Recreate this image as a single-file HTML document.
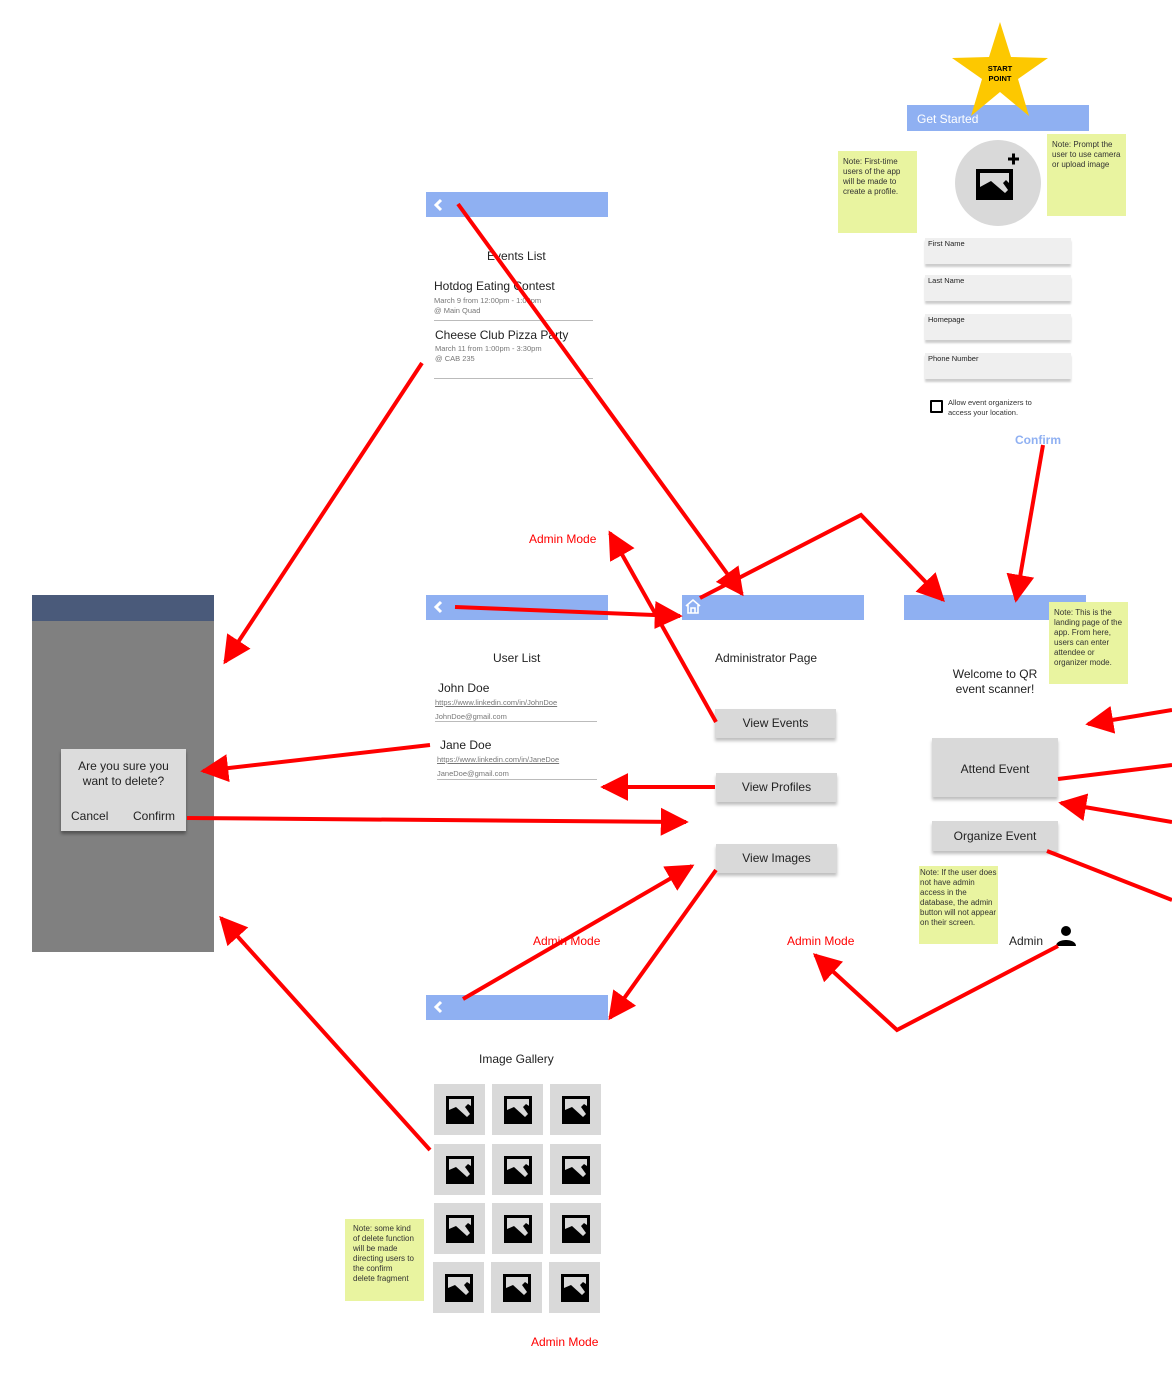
<!DOCTYPE html>
<html><head><meta charset="utf-8"><style>
*{margin:0;padding:0;box-sizing:border-box}
body{width:1172px;height:1379px;background:#fff;position:relative;overflow:hidden;font-family:"Liberation Sans",sans-serif;color:#222}
.a{position:absolute}
.bar{position:absolute;height:26px;background:#8fb0f2}
.note{position:absolute;background:#e9f4a0;font-size:8px;line-height:10px;padding:6px 5px;color:#333}
.btn{position:absolute;background:#d9d9d9;box-shadow:0 3px 3px rgba(0,0,0,.25);font-size:12px;text-align:center}
.fld{position:absolute;left:925px;width:146px;height:26px;background:#efefef;box-shadow:0 3px 2px rgba(0,0,0,.2);font-size:7.5px;padding:1px 3px}
.red{position:absolute;color:#f00;font-size:12px}
.t12{position:absolute;font-size:12px}
.sm{position:absolute;font-size:7.5px;color:#777;line-height:10px}
.hr{position:absolute;height:1px;background:#bbb}
.tile{position:absolute;width:51px;height:51px;background:#d9d9d9}
.tile svg{position:absolute;left:12px;top:12px}
.chev{position:absolute}
</style></head><body>

<div class="bar" style="left:907px;top:105px;width:182px;height:26px;color:#fff;font-size:12px;padding:7px 10px">Get Started</div>
<svg class="a" style="left:950px;top:22px" width="100" height="96" viewBox="0 0 100 96">
<polygon points="50,0 61,35 98,36 68,57 79,94 50,70 21,94 32,57 2,36 39,35" fill="#fdc800"/>
<text x="50" y="49" font-size="7.5" font-weight="bold" text-anchor="middle" font-family="Liberation Sans">START</text>
<text x="50" y="59" font-size="7.5" font-weight="bold" text-anchor="middle" font-family="Liberation Sans">POINT</text>
</svg>
<div class="note" style="left:838px;top:151px;width:79px;height:82px">Note: First-time users of the app will be made to create a profile.</div>
<div class="note" style="left:1047px;top:134px;width:79px;height:82px">Note: Prompt the user to use camera or upload image</div>
<div class="a" style="left:955px;top:140px;width:86px;height:86px;border-radius:50%;background:#d9d9d9"></div>
<svg class="a" style="left:976px;top:150px" width="48" height="52" viewBox="0 0 48 52">
<path d="M32,9h11M37.5,3.5v11" stroke="#000" stroke-width="3"/>
<rect x="0" y="19" width="37" height="31" fill="#000"/>
<polygon points="4,23 33,23 33,33 30,30 27,33 32,40 29,43 15,31 4,37" fill="#d9d9d9"/>
</svg>
<div class="fld" style="top:238px">First Name</div>
<div class="fld" style="top:275px">Last Name</div>
<div class="fld" style="top:314px">Homepage</div>
<div class="fld" style="top:353px">Phone Number</div>
<div class="a" style="left:930px;top:400px;width:13px;height:13px;border:2px solid #000;border-radius:1px"></div>
<div class="a" style="left:948px;top:398px;font-size:7.5px;line-height:10px;color:#333">Allow event organizers to<br>access your location.</div>
<div class="a" style="left:1015px;top:433px;font-size:12px;font-weight:bold;color:#8fb0f2">Confirm</div>

<!-- events list -->
<div class="bar" style="left:426px;top:192px;width:182px;height:25px"></div>
<svg class="chev" style="left:432px;top:198px" width="12" height="14"><path d="M9,2 L4,7 L9,12" fill="none" stroke="#fff" stroke-width="3"/></svg>
<div class="t12" style="left:487px;top:249px">Events List</div>
<div class="t12" style="left:434px;top:279px">Hotdog Eating Contest</div>
<div class="sm" style="left:434px;top:296px">March 9 from 12:00pm - 1:00pm<br>@ Main Quad</div>
<div class="hr" style="left:434px;top:320px;width:159px"></div>
<div class="t12" style="left:435px;top:328px">Cheese Club Pizza Party</div>
<div class="sm" style="left:435px;top:344px">March 11 from 1:00pm - 3:30pm<br>@ CAB 235</div>
<div class="hr" style="left:434px;top:378px;width:159px"></div>

<!-- delete panel -->
<div class="a" style="left:32px;top:595px;width:182px;height:357px;background:#808080"></div>
<div class="a" style="left:32px;top:595px;width:182px;height:26px;background:#4a5a7a"></div>
<div class="a" style="left:61px;top:749px;width:125px;height:82px;background:#dcdcdc;box-shadow:0 3px 3px rgba(0,0,0,.35);font-size:12px;text-align:center;padding-top:10px;line-height:15px">Are you sure you<br>want to delete?</div>
<div class="t12" style="left:71px;top:809px">Cancel</div>
<div class="t12" style="left:133px;top:809px">Confirm</div>

<!-- user list -->
<div class="bar" style="left:426px;top:595px;width:182px;height:25px"></div>
<svg class="chev" style="left:432px;top:600px" width="12" height="14"><path d="M9,2 L4,7 L9,12" fill="none" stroke="#fff" stroke-width="3"/></svg>
<div class="t12" style="left:493px;top:651px">User List</div>
<div class="t12" style="left:438px;top:681px">John Doe</div>
<div class="sm" style="left:435px;top:698px;text-decoration:underline">https://www.linkedin.com/in/JohnDoe</div>
<div class="sm" style="left:435px;top:712px">JohnDoe@gmail.com</div>
<div class="hr" style="left:435px;top:721px;width:162px"></div>
<div class="t12" style="left:440px;top:738px">Jane Doe</div>
<div class="sm" style="left:437px;top:755px;text-decoration:underline">https://www.linkedin.com/in/JaneDoe</div>
<div class="sm" style="left:437px;top:769px">JaneDoe@gmail.com</div>
<div class="hr" style="left:437px;top:779px;width:160px"></div>

<!-- admin page -->
<div class="bar" style="left:682px;top:595px;width:182px;height:25px"></div>
<svg class="a" style="left:684px;top:598px" width="18" height="17" viewBox="0 0 18 17"><path d="M2,8 L9,2 L16,8 M4,7 V15 H14 V7 M7,15 V10 H11 V15" fill="none" stroke="#fff" stroke-width="1.6"/></svg>
<div class="t12" style="left:715px;top:651px">Administrator Page</div>
<div class="btn" style="left:715px;top:709px;width:121px;height:29px;line-height:29px">View Events</div>
<div class="btn" style="left:716px;top:773px;width:121px;height:29px;line-height:29px">View Profiles</div>
<div class="btn" style="left:716px;top:844px;width:121px;height:29px;line-height:29px">View Images</div>

<!-- landing -->
<div class="bar" style="left:904px;top:595px;width:182px;height:25px"></div>
<div class="note" style="left:1049px;top:602px;width:79px;height:82px">Note: This is the landing page of the app. From here, users can enter attendee or organizer mode.</div>
<div class="a" style="left:935px;top:667px;width:120px;text-align:center;font-size:12px;line-height:15px">Welcome to QR<br>event scanner!</div>
<div class="btn" style="left:932px;top:738px;width:126px;height:59px;line-height:62px">Attend Event</div>
<div class="btn" style="left:932px;top:821px;width:126px;height:30px;line-height:30px">Organize Event</div>
<div class="note" style="left:919px;top:866px;width:79px;height:78px;padding:2px 1px">Note: If the user does not have admin access in the database, the admin button will not appear on their screen.</div>
<div class="t12" style="left:1009px;top:934px">Admin</div>
<svg class="a" style="left:1055px;top:925px" width="22" height="22" viewBox="0 0 22 22"><circle cx="11" cy="6" r="5"/><path d="M1,21 C1,13 21,13 21,21Z"/></svg>

<!-- gallery -->
<div class="bar" style="left:426px;top:995px;width:182px;height:25px"></div>
<svg class="chev" style="left:432px;top:1000px" width="12" height="14"><path d="M9,2 L4,7 L9,12" fill="none" stroke="#fff" stroke-width="3"/></svg>
<div class="t12" style="left:479px;top:1052px">Image Gallery</div>
<div id="g"></div>
<div class="note" style="left:345px;top:1219px;width:79px;height:82px;padding:5px 8px">Note: some kind of delete function will be made directing users to the confirm delete fragment</div>

<div class="red" style="left:529px;top:532px">Admin Mode</div>
<div class="red" style="left:533px;top:934px">Admin Mode</div>
<div class="red" style="left:787px;top:934px">Admin Mode</div>
<div class="red" style="left:531px;top:1335px">Admin Mode</div>

<svg class="a" style="left:0;top:0" width="1172" height="1379">
<defs><marker id="h" viewBox="0 0 10 10" refX="9" refY="5" markerWidth="28" markerHeight="30" markerUnits="userSpaceOnUse" orient="auto"><path d="M0,0 L10,5 L0,10z" fill="#f00"/></marker></defs>
<g stroke="#f00" stroke-width="4" fill="none">
<path d="M458,204 L742,594" marker-end="url(#h)"/>
<path d="M422,363 L225,662" marker-end="url(#h)"/>
<path d="M455,607 L680,616" marker-end="url(#h)"/>
<path d="M716,722 L610,533" marker-end="url(#h)"/>
<path d="M430,745 L203,771" marker-end="url(#h)"/>
<path d="M715,787 L603,787" marker-end="url(#h)"/>
<path d="M187,818 L686,822" marker-end="url(#h)"/>
<path d="M463,999 L692,866" marker-end="url(#h)"/>
<path d="M716,870 L610,1018" marker-end="url(#h)"/>
<path d="M430,1150 L221,918" marker-end="url(#h)"/>
<path d="M700,598 L861,515 L943,600" marker-end="url(#h)"/>
<path d="M1043,445 L1016,600" marker-end="url(#h)"/>
<path d="M1058,946 L897,1030 L815,955" marker-end="url(#h)"/>
<path d="M1172,710 L1088,724" marker-end="url(#h)"/>
<path d="M1058,779 L1172,765"/>
<path d="M1172,822 L1061,803" marker-end="url(#h)"/>
<path d="M1047,851 L1172,900"/>
</g></svg>
<script>
var g=document.getElementById('g'),xs=[434,492,550],ys=[1084,1144,1203,1262],h='';
ys.forEach(function(y,r){xs.forEach(function(x){var xx=r==3?x-1:x;h+='<div class="tile" style="left:'+xx+'px;top:'+y+'px"><svg width="28" height="28" viewBox="0 0 28 28"><rect width="28" height="28"/><polygon points="3,3 25,3 25,10 22,8 19,11 24,18 21,21 10,11 3,14" fill="#d9d9d9"/></svg></div>'})});
g.innerHTML=h;
</script>
</body></html>
